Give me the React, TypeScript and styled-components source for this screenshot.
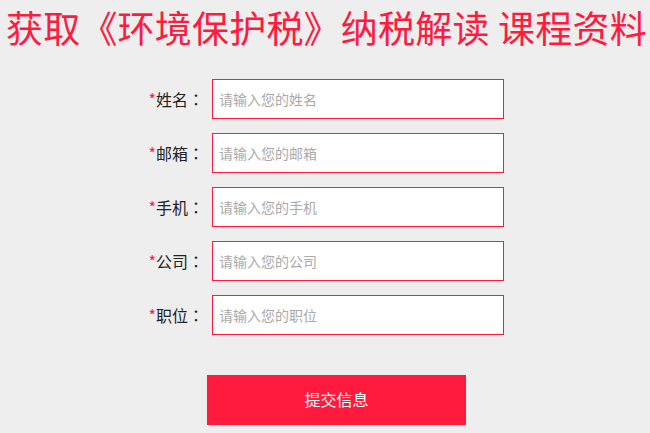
import styled, { createGlobalStyle } from 'styled-components';

const GlobalStyle = createGlobalStyle`
  html, body {
    margin: 0;
    padding: 0;
    background: #eeeeee;
    font-family: "Microsoft YaHei", "Noto Sans CJK SC", sans-serif;
  }
`;

const Page = styled.div`
  width: 650px;
  height: 433px;
  background: #eeeeee;
  overflow: hidden;
`;

const Title = styled.h1`
  margin: 0;
  padding: 4px 0 0 6px;
  font-size: 37px;
  font-weight: 400;
  line-height: 46px;
  color: #ff1a3e;
  white-space: nowrap;
  letter-spacing: 0.2px;
`;

const Form = styled.form`
  display: flex;
  flex-direction: column;
  gap: 14px;
  margin-top: 29px;
`;

const Row = styled.div`
  display: flex;
  align-items: center;
`;

const Label = styled.label`
  width: 204px;
  margin-right: 8px;
  text-align: right;
  font-size: 16px;
  color: #222;
`;

const Star = styled.span`
  color: #ff1a3e;
`;

const Colon = styled.span`
  font-family: "Noto Sans CJK TC", sans-serif;
`;

const Input = styled.input`
  box-sizing: border-box;
  width: 292px;
  height: 40px;
  padding: 0 6px 1px;
  border: 1px solid #ff1a3e;
  background: #fff;
  font-family: inherit;
  font-size: 14px;
  outline: none;

  &::placeholder {
    color: #aaaaaa;
  }
`;

const Submit = styled.button`
  display: block;
  width: 259px;
  height: 50px;
  margin: 40px 0 0 207px;
  padding: 0 0 3px;
  border: none;
  background: #ff1a3e;
  color: #fff;
  font-family: inherit;
  font-size: 16px;
  cursor: pointer;
`;

const fields = ['姓名', '邮箱', '手机', '公司', '职位'];

export default function App() {
  return (
    <Page>
      <GlobalStyle />
      <Title>获取《环境保护税》纳税解读 课程资料</Title>
      <Form onSubmit={(e) => e.preventDefault()}>
        {fields.map((f) => (
          <Row key={f}>
            <Label>
              <Star>*</Star>
              {f}
              <Colon>：</Colon>
            </Label>
            <Input placeholder={`请输入您的${f}`} />
          </Row>
        ))}
      </Form>
      <Submit type="button">提交信息</Submit>
    </Page>
  );
}
